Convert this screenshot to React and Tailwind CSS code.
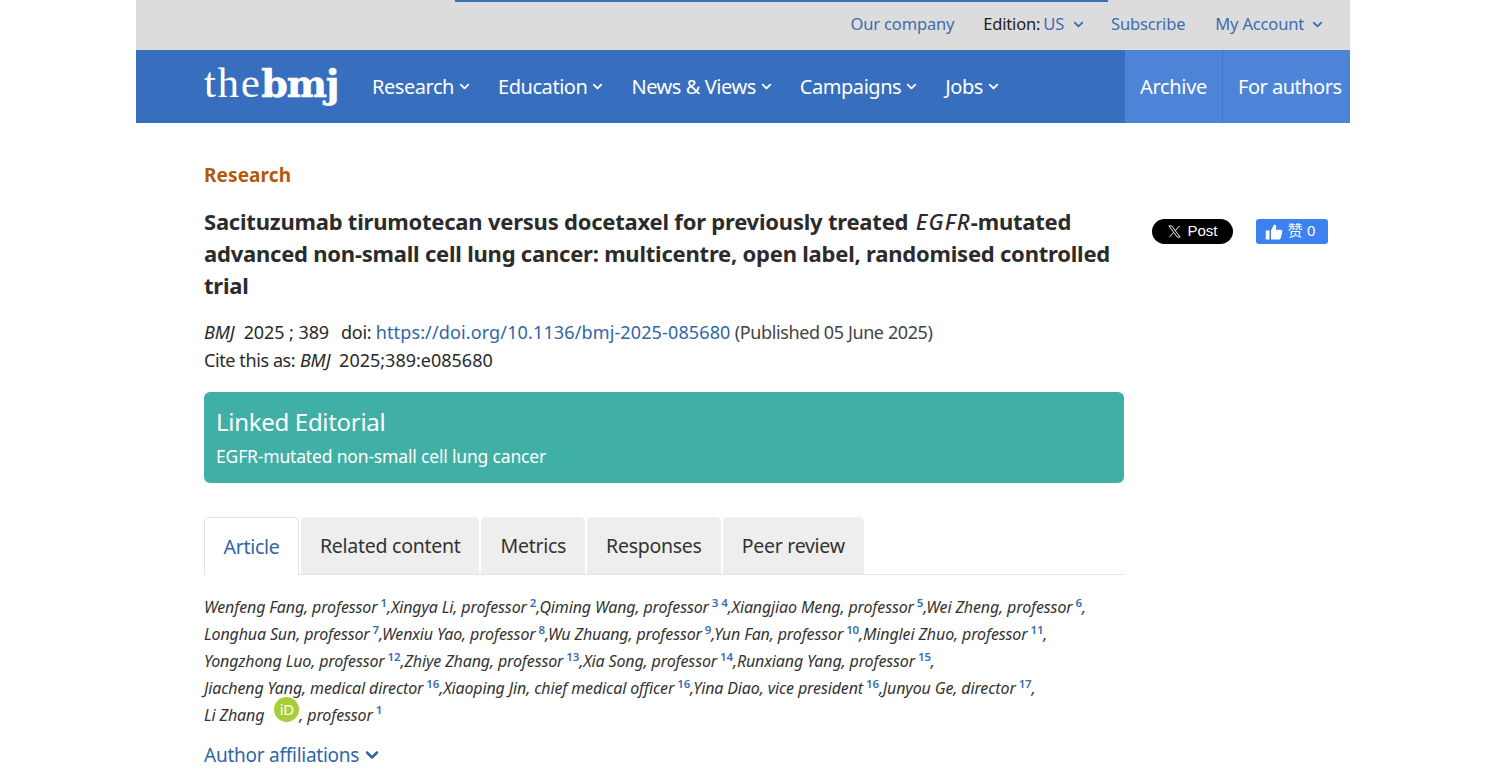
import React from "react";
import { ChevronDown } from "lucide-react";

const mainNav = ["Research", "Education", "News & Views", "Campaigns", "Jobs"];

const authorLines = [
  [["Wenfeng Fang, professor", "1"], ["Xingya Li, professor", "2"], ["Qiming Wang, professor", "3 4"], ["Xiangjiao Meng, professor", "5"], ["Wei Zheng, professor", "6"]],
  [["Longhua Sun, professor", "7"], ["Wenxiu Yao, professor", "8"], ["Wu Zhuang, professor", "9"], ["Yun Fan, professor", "10"], ["Minglei Zhuo, professor", "11"]],
  [["Yongzhong Luo, professor", "12"], ["Zhiye Zhang, professor", "13"], ["Xia Song, professor", "14"], ["Runxiang Yang, professor", "15"]],
  [["Jiacheng Yang, medical director", "16"], ["Xiaoping Jin, chief medical officer", "16"], ["Yina Diao, vice president", "16"], ["Junyou Ge, director", "17"]],
];

const Chevron = ({ className }) => <ChevronDown className={className} strokeWidth={3} />;

const Sup = ({ children }) => (
  <sup className="text-[11.5px] font-semibold not-italic text-[#3a6cb0] ml-[3px] top-[-6px] leading-none">{children}</sup>
);

const App = () => {
  return (
    <div className="bg-white h-[778px] overflow-hidden font-['Noto_Sans',sans-serif] text-[#2a2a2a]">
      <div className="w-[1214px] ml-[136px]">
        {/* top bar */}
        <div className="bg-[#dcdcdc] h-[50px] flex flex-col">
          <div className="h-[1.5px] w-[653px] ml-[319px] bg-[#3a6fb8]" />
          <div className="flex justify-end items-center h-[46px] pr-[25px] text-[16.5px] tracking-[-0.17px] text-[#3c6cb0]">
            <span>Our company</span>
            <span className="ml-[29px] text-[#222]">Edition:</span>
            <span className="ml-[3px]">US</span>
            <Chevron className="w-[15px] h-[15px] ml-[7px]" />
            <span className="ml-[25px]">Subscribe</span>
            <span className="ml-[30px]">My Account</span>
            <Chevron className="w-[15px] h-[15px] ml-[6px]" />
          </div>
        </div>

        {/* main nav */}
        <div className="bg-[#376ebd] h-[73px] flex items-center text-white">
          <div className="ml-[68px] w-[168px] flex items-baseline leading-none pb-[8px] whitespace-nowrap">
            <span className="text-[43px] tracking-[1.6px] font-['Liberation_Serif',serif]">the</span>
            <span className="text-[38px] tracking-[-1.2px] font-['DejaVu_Serif',serif] font-bold [-webkit-text-stroke:0.6px_white]">bmj</span>
          </div>
          <div className="flex gap-[26px] text-[20px] tracking-[-0.45px]">
            {mainNav.map((item) => (
              <div key={item} className="flex items-center gap-[3px]">
                <span>{item}</span>
                <Chevron className="w-[15px] h-[15px]" />
              </div>
            ))}
          </div>
          <div className="ml-auto flex h-full text-[20px] tracking-[-0.3px]">
            <div className="w-[98px] bg-[#4d84d8] flex items-center justify-center border-r border-[#3f75c6]">Archive</div>
            <div className="w-[127px] bg-[#4d84d8] flex items-center pl-[15px] tracking-[-0.5px]">For authors</div>
          </div>
        </div>

        {/* body */}
        <div className="flex pl-[68px]">
          <div className="w-[920px]">
            <div className="mt-[38px] text-[#b35a08] text-[19px] font-bold leading-[28px] tracking-[0.1px]">Research</div>
            <h1 className="mt-[16px] text-[22px] font-bold leading-[32px] text-[#2b2b2b] tracking-[-0.22px]">
              Sacituzumab tirumotecan versus docetaxel for previously treated <em className="font-medium tracking-[1.2px] ml-[2px]">EGFR</em>-mutated advanced non-small cell lung cancer: multicentre, open label, randomised controlled trial
            </h1>
            <div className="mt-[17px] text-[18px] leading-[28px] tracking-[-0.08px]">
              <div>
                <em>BMJ</em>
                <span className="ml-[9px]">2025 ; 389</span>
                <span className="ml-[12px] tracking-[-0.3px]">doi: </span>
                <span className="text-[#2f66a8] tracking-[0.13px]">https://doi.org/10.1136/bmj-2025-085680</span>
                <span className="text-[#444] tracking-[-0.4px]"> (Published 05 June 2025)</span>
              </div>
              <div>
                <span className="tracking-[-0.4px]">Cite this as:</span> <em>BMJ</em> <span className="ml-[4px] tracking-[0px]">2025;389:e085680</span>
              </div>
            </div>

            <div className="mt-[18px] h-[91px] rounded-[6px] bg-[#40b0a6] text-white px-[12px] pt-[13px]">
              <div className="text-[24px] leading-[34px] tracking-[-0.3px]">Linked Editorial</div>
              <div className="mt-[4px] text-[17.5px] leading-[26px] tracking-[-0.17px]">EGFR-mutated non-small cell lung cancer</div>
            </div>

            {/* tabs */}
            <div className="mt-[34px] flex gap-[2px] border-b border-[#e4e4e4] h-[58px] text-[19.5px] tracking-[-0.27px]">
              <div className="w-[95px] h-[58px] bg-white border border-b-0 border-[#e2e2e2] rounded-t-[5px] text-[#2f66a8] flex items-center justify-center">Article</div>
              {["Related content", "Metrics", "Responses", "Peer review"].map((tab) => (
                <div key={tab} className="px-[19px] h-[57px] bg-[#eeeeee] rounded-t-[5px] text-[#333] flex items-center justify-center">{tab}</div>
              ))}
            </div>

            {/* authors */}
            <div className="mt-[19px] text-[16px] italic leading-[27px] tracking-[-0.13px] text-[#333] whitespace-nowrap">
              {authorLines.map((line, i) => (
                <div key={i}>
                  {line.map(([name, ref], j) => (
                    <span key={j}>
                      {j > 0 && ","}
                      {name}
                      <Sup>{ref}</Sup>
                    </span>
                  ))}
                  ,
                </div>
              ))}
              <div className="flex items-center h-[27px]">
                <span>Li Zhang</span>
                <span className="ml-[10px] mb-[13px] w-[25px] h-[25px] rounded-full bg-[#a6ce39] text-white text-[15px] not-italic flex items-center justify-center tracking-[-0.5px]">iD</span>
                <span>, professor</span>
                <Sup>1</Sup>
              </div>
            </div>

            <div className="mt-[12px] flex items-center gap-[3px] text-[19px] tracking-[-0.25px] text-[#2f66a8]">
              <span>Author affiliations</span>
              <ChevronDown className="w-[20px] h-[20px]" strokeWidth={3} />
            </div>
          </div>

          {/* share buttons */}
          <div className="ml-[28px] mt-[96px] flex items-start gap-[23px] font-['Liberation_Sans',sans-serif]">
            <div className="w-[81px] h-[25px] rounded-full bg-black text-white text-[15px] flex items-center justify-center gap-[5px]">
              <svg viewBox="0 0 24 24" className="w-[15px] h-[15px]" fill="none" stroke="#fff" strokeWidth="1.5">
                <path d="M3 3h4.500l13.500 18h-4.500zM20 3l-7 8M10.500 13.500 4 21" />
              </svg>
              <span>Post</span>
            </div>
            <div className="w-[72px] h-[25px] rounded-[3px] bg-[#3b82f0] text-white text-[15px] pr-[4px] flex items-center justify-center gap-[5px] font-['Liberation_Sans','Noto_Sans_CJK_SC',sans-serif]">
              <svg viewBox="0 0 24 24" className="w-[18px] h-[18px]" fill="#fff">
                <path d="M1 10h5v12H1zM8 10l4-8c2 0 3 1.500 3 3.500L14.500 9H21c1.500 0 2.500 1.300 2 3l-2 8c-.3 1.200-1.200 2-2.500 2H8z" />
              </svg>
              <span>赞 0</span>
            </div>
          </div>
        </div>
      </div>
    </div>
  );
};

export default App;
